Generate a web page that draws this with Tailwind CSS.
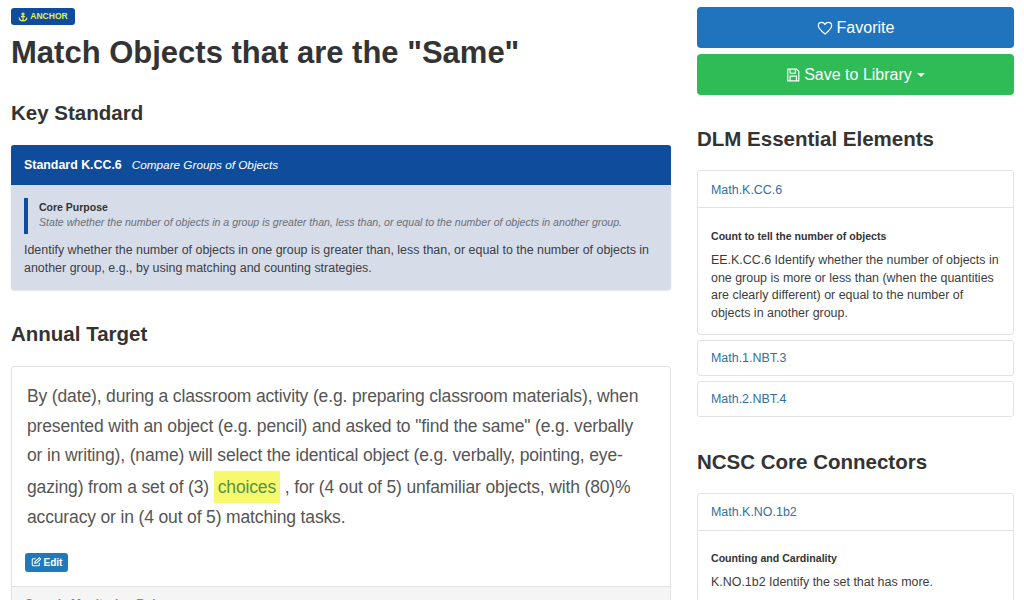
<!DOCTYPE html>
<html lang="en">
  <head>
    <meta charset="UTF-8" />
    <title>Match Objects</title>
    <script src="https://cdn.jsdelivr.net/npm/@tailwindcss/browser@4"></script>
  </head>
  <body class="h-[600px] w-[1024px] overflow-hidden bg-white font-['Liberation_Sans',sans-serif] text-[#333]">
    <div class="flex gap-[26px] pl-[11px]">
      <!-- Left column -->
      <main class="w-[660px] shrink-0">
        <div class="pt-[8px]">
          <span class="flex h-[17px] w-[64px] items-center justify-center gap-[2px] rounded-[3px] bg-[#0f4d9c] text-[8.500px] font-bold text-[#e3ef4f]">
            <svg class="h-[10px] w-[10px]" viewBox="0 0 24 24" fill="none" stroke="currentColor" stroke-width="3"><circle cx="12" cy="5" r="2.5" /><path d="M12 8v14M7 11h10M3 13c0 5 4 8 9 8s9-3 9-8" /></svg>
            ANCHOR
          </span>
        </div>
        <h1 class="mt-[8px] text-[31px] leading-[40px] font-bold text-[#333]">Match Objects that are the "Same"</h1>
        <h2 class="mt-[27px] text-[20.500px] leading-[26px] font-bold">Key Standard</h2>

        <section class="mt-[19px] overflow-hidden rounded-[3px] bg-[#d6dce8] shadow-[0_1px_2px_rgba(0,0,0,0.1)]">
          <div class="flex h-[40px] items-center gap-[10px] bg-[#0f4d9c] pl-[13px] text-[12.400px] text-white">
            <span class="font-bold">Standard K.CC.6</span>
            <span class="text-[11.750px] italic">Compare Groups of Objects</span>
          </div>
          <div class="px-[13px] pt-[13px] pb-[13px]">
            <div class="border-l-[4px] border-[#0f4d9c] pl-[11px]">
              <div class="text-[10.500px] leading-[18px] font-bold">Core Purpose</div>
              <div class="pb-[5px] text-[10.600px] leading-[13px] text-[#6b7077] italic">State whether the number of objects in a group is greater than, less than, or equal to the number of objects in another group.</div>
            </div>
            <p class="mt-[7px] text-[12.450px] leading-[18px] text-[#3d4046]">Identify whether the number of objects in one group is greater than, less than, or equal to the number of objects in another group, e.g., by using matching and counting strategies.</p>
          </div>
        </section>

        <h2 class="mt-[31px] text-[20.500px] leading-[26px] font-bold">Annual Target</h2>

        <section class="mt-[19px] rounded-[3px] border border-[#e2e2e2] pt-[15px]">
          <p class="pr-[26px] pl-[15px] text-[17.500px] leading-[29.500px] tracking-[-0.15px] text-[#555]">
            By (date), during a classroom activity (e.g. preparing classroom materials), when presented with an object (e.g. pencil) and asked to "find the same" (e.g. verbally or in writing), (name) will select the identical object (e.g. verbally, pointing, eye-gazing) from a set of (3)
            <span class="inline-block bg-[#f5f96b] px-[4px] leading-[32px] text-[#5b8f47]">choices</span>
            , for (4 out of 5) unfamiliar objects, with (80)% accuracy or in (4 out of 5) matching tasks.
          </p>
          <div class="mt-[18px] px-[13px]">
            <span class="inline-flex h-[19px] w-[43px] items-center justify-center gap-[3px] rounded-[3px] bg-[#2079b8] text-[10px] font-bold text-white">
              <svg class="h-[10px] w-[10px]" viewBox="0 0 24 24" fill="none" stroke="currentColor" stroke-width="2.5"><path d="M20 14v5a2 2 0 0 1-2 2H5a2 2 0 0 1-2-2V6a2 2 0 0 1 2-2h6" /><path d="M9 15l1-4L20 2l3 3-9 9z" /></svg>
              Edit
            </span>
          </div>
          <div class="mt-[12px] h-[40px] border-t border-[#e2e2e2] bg-[#f5f5f5] px-[13px] pt-[8px] text-[12px] font-bold text-[#888]">Sample Monitoring Rule</div>
        </section>
      </main>

      <!-- Right column -->
      <aside class="w-[317px] shrink-0 pt-[7px]">
        <button class="flex h-[41px] w-full items-center justify-center gap-[4px] rounded-[4px] bg-[#1f74bd] text-[16px] text-white">
          <svg class="h-[16px] w-[16px]" viewBox="0 0 24 24" fill="none" stroke="currentColor" stroke-width="1.8"><path d="M12 21C6 16 2 12.500 2 8.500 2 5.500 4.300 3.500 7 3.500c2 0 3.800 1 5 3 1.200-2 3-3 5-3 2.700 0 5 2 5 5 0 4-4 7.500-10 12.500z" /></svg>
          Favorite
        </button>
        <button class="mt-[6px] flex h-[41px] w-full items-center justify-center gap-[4px] rounded-[4px] bg-[#2fbb55] text-[16px] text-white">
          <svg class="h-[14px] w-[14px]" viewBox="0 0 24 24" fill="none" stroke="currentColor" stroke-width="2"><path d="M3 2h15l4 4v16H3z" /><path d="M7 2v7h9V2M7 22v-8h11v8" /></svg>
          Save to Library
          <span class="ml-[1px] h-0 w-0 border-x-[4px] border-t-[4px] border-x-transparent border-t-white"></span>
        </button>

        <h2 class="mt-[31px] text-[20.500px] leading-[26px] font-bold">DLM Essential Elements</h2>

        <div class="mt-[18px] rounded-[3px] border border-[#e2e2e2]">
          <div class="px-[13px] pt-[10px] pb-[8px] text-[12.450px] leading-[18px] text-[#31709f]">Math.K.CC.6</div>
          <div class="border-t border-[#e2e2e2] px-[13px] pt-[21px] pb-[11px]">
            <div class="text-[10.600px] leading-[14px] font-bold">Count to tell the number of objects</div>
            <p class="mt-[9px] text-[12.450px] leading-[17.700px] text-[#3d3d3d]">EE.K.CC.6 Identify whether the number of objects in one group is more or less than (when the quantities are clearly different) or equal to the number of objects in another group.</p>
          </div>
        </div>
        <div class="mt-[5px] rounded-[3px] border border-[#e2e2e2] px-[13px] py-[8px] text-[12.450px] leading-[18px] text-[#31709f]">Math.1.NBT.3</div>
        <div class="mt-[5px] rounded-[3px] border border-[#e2e2e2] px-[13px] py-[8px] text-[12.450px] leading-[18px] text-[#31709f]">Math.2.NBT.4</div>

        <h2 class="mt-[32px] text-[20.500px] leading-[26px] font-bold">NCSC Core Connectors</h2>

        <div class="mt-[18px] rounded-[3px] border border-[#e2e2e2]">
          <div class="px-[13px] py-[9px] text-[12.450px] leading-[18px] text-[#31709f]">Math.K.NO.1b2</div>
          <div class="border-t border-[#e2e2e2] px-[13px] pt-[20px] pb-[13px]">
            <div class="text-[10.600px] leading-[14px] font-bold">Counting and Cardinality</div>
            <p class="mt-[9px] text-[12.450px] leading-[17.700px] text-[#3d3d3d]">K.NO.1b2 Identify the set that has more.</p>
          </div>
        </div>
      </aside>
    </div>
  </body>
</html>
